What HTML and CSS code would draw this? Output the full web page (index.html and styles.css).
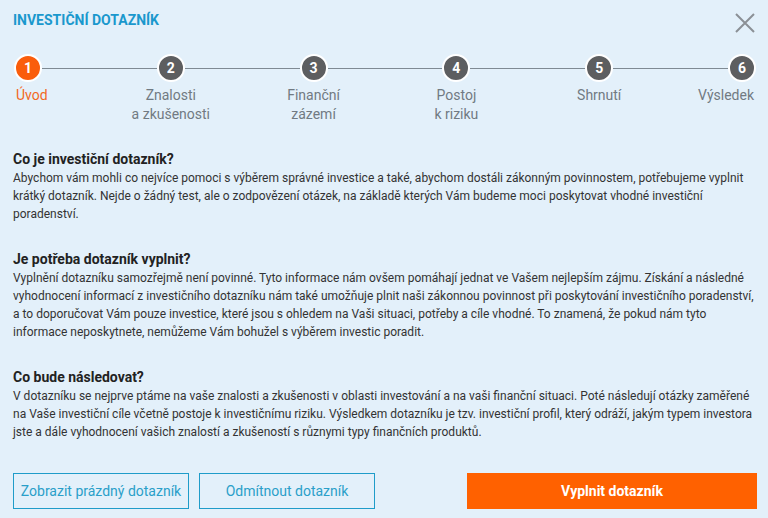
FILE: index.html
```html
<!doctype html>
<html lang="cs">
<head>
	<meta charset="UTF-8">
	<title>Investiční dotazník</title>
<link rel="stylesheet" href="styles.css">
</head>
<body>
<div class="dialog">
	<div class="header">
		<span class="title">Investiční dotazník</span>
		<span class="close">
			<svg width="20" height="20" viewBox="0 0 20 20"><path d="M1 1 L19 19 M19 1 L1 19" stroke="#8b9095" stroke-width="2" fill="none"/></svg>
		</span>
	</div>
	<div class="steps">
		<div class="step first active">
			<span class="num">1</span>
			<span class="label">Úvod</span>
		</div>
		<div class="line"></div>
		<div class="step">
			<span class="num">2</span>
			<span class="label">Znalosti<br>a zkušenosti</span>
		</div>
		<div class="line"></div>
		<div class="step">
			<span class="num">3</span>
			<span class="label">Finanční<br>zázemí</span>
		</div>
		<div class="line"></div>
		<div class="step">
			<span class="num">4</span>
			<span class="label">Postoj<br>k riziku</span>
		</div>
		<div class="line"></div>
		<div class="step">
			<span class="num">5</span>
			<span class="label">Shrnutí</span>
		</div>
		<div class="line"></div>
		<div class="step last">
			<span class="num">6</span>
			<span class="label">Výsledek</span>
		</div>
	</div>
	<div class="content">
		<h2>Co je investiční dotazník?</h2>
		<p>Abychom vám mohli co nejvíce pomoci s výběrem správné investice a také, abychom dostáli zákonným povinnostem, potřebujeme vyplnit krátký dotazník. Nejde o žádný test, ale o zodpovězení otázek, na základě kterých Vám budeme moci poskytovat vhodné investiční poradenství.</p>
		<h2>Je potřeba dotazník vyplnit?</h2>
		<p>Vyplnění dotazníku samozřejmě není povinné. Tyto informace nám ovšem pomáhají jednat ve Vašem nejlepším zájmu. Získání a následné vyhodnocení informací z investičního dotazníku nám také umožňuje plnit naši zákonnou povinnost při poskytování investičního poradenství, a to doporučovat Vám pouze investice, které jsou s ohledem na Vaši situaci, potřeby a cíle vhodné. To znamená, že pokud nám tyto informace neposkytnete, nemůžeme Vám bohužel s výběrem investic poradit.</p>
		<h2>Co bude následovat?</h2>
		<p>V dotazníku se nejprve ptáme na vaše znalosti a zkušenosti v oblasti investování a na vaši finanční situaci. Poté následují otázky zaměřené na Vaše investiční cíle včetně postoje k investičnímu riziku. Výsledkem dotazníku je tzv. investiční profil, který odráží, jakým typem investora jste a dále vyhodnocení vašich znalostí a zkušeností s různymi typy finančních produktů.</p>
	</div>
	<div class="actions">
		<button class="btn outline">Zobrazit prázdný dotazník</button>
		<button class="btn outline">Odmítnout dotazník</button>
		<button class="btn primary">Vyplnit dotazník</button>
	</div>
</div>
</body>
</html>
```

FILE: styles.css
```css
*{
	margin:0;
	padding:0;
	box-sizing:border-box;
}
body{
	background:#e3f0fa;
	font-family:Roboto, "Liberation Sans", sans-serif;
	color:#333;
}
.dialog{
	width:768px;
	height:518px;
}
.header{
	display:flex;
	justify-content:space-between;
	padding:11px 13px 0 13px;
}
.title{
	font-size:14px;
	font-weight:bold;
	line-height:18px;
	text-transform:uppercase;
	color:#1a98cd;
}
.close{
	display:block;
	width:20px;
	height:20px;
	margin-top:2px;
	cursor:pointer;
}
.close svg{
	display:block;
}
.steps{
	display:flex;
	margin-top:21px;
	padding:0 12px 0 14px;
}
.step{
	width:28px;
	display:flex;
	flex-direction:column;
	align-items:center;
}
.step.first{
	align-items:flex-start;
}
.step.last{
	align-items:flex-end;
}
.num{
	display:flex;
	align-items:center;
	justify-content:center;
	width:28px;
	height:28px;
	border:2px solid #fff;
	border-radius:50%;
	background:#5d5e60;
	color:#fff;
	font-size:14px;
	font-weight:bold;
}
.active .num{
	background:#fa5d0c;
}
.label{
	margin-top:4px;
	font-size:14px;
	line-height:19px;
	color:#717a82;
	text-align:center;
	white-space:nowrap;
}
.first .label{
	margin-left:2px;
}
.last .label{
	margin-right:2px;
}
.active .label{
	color:#f2691f;
}
.line{
	flex:1;
	height:1px;
	margin-top:14px;
	background:#7f8a93;
}
.content{
	margin-top:25px;
	padding:0 13px;
}
h2{
	font-size:14px;
	line-height:20px;
	font-weight:bold;
	color:#222;
}
p{
	font-size:12px;
	line-height:18px;
	color:#333;
	margin-bottom:26px;
}
.content p:last-child{
	margin-bottom:0;
}
.actions{
	display:flex;
	gap:10px;
	margin-top:32px;
	padding:0 11px 0 13px;
}
.btn{
	height:36px;
	font-family:Roboto, "Liberation Sans", sans-serif;
	font-size:14px;
	cursor:pointer;
}
.outline{
	width:176px;
	border:1px solid #1f9cc9;
	background:transparent;
	color:#2a9fc9;
}
.primary{
	width:290px;
	margin-left:auto;
	border:none;
	background:#ff6100;
	color:#fff;
	font-weight:bold;
}
```
